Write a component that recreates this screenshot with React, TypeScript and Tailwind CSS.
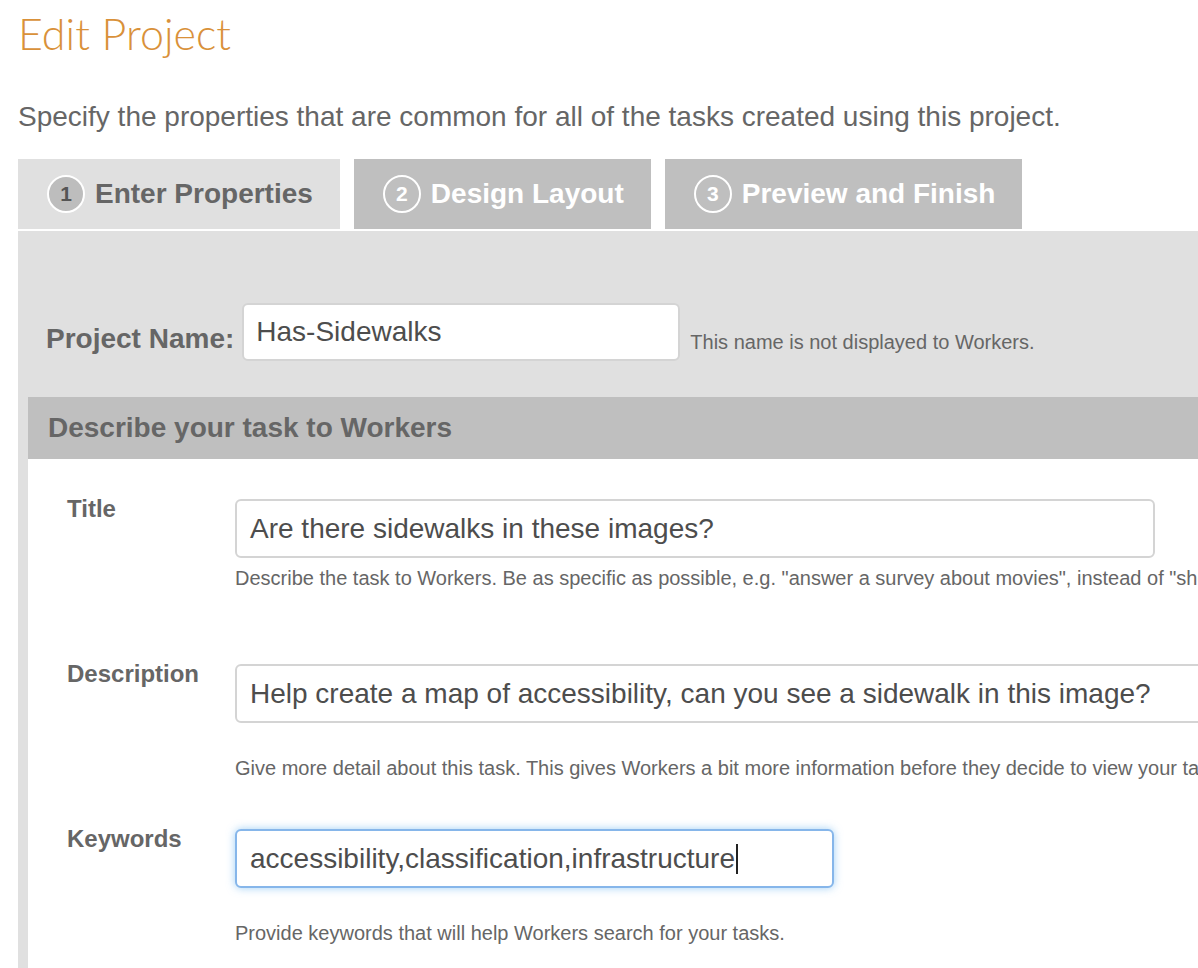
import React from 'react';

type Step = { n: number; label: string; active?: boolean };

const steps: Step[] = [
  { n: 1, label: 'Enter Properties', active: true },
  { n: 2, label: 'Design Layout' },
  { n: 3, label: 'Preview and Finish' },
];

// Pestaña del asistente
const StepTab: React.FC<{ step: Step }> = ({ step }) => (
  <div
    className={`h-[70px] flex items-center gap-[10px] pl-[29px] pr-[27px] ${
      step.active ? 'bg-[#e0e0e0] text-[#666]' : 'bg-[#bfbfbf] text-white'
    }`}
  >
    <span
      className={`w-[38px] h-[38px] rounded-full border-2 border-white flex items-center justify-center text-[21px] font-bold ${
        step.active ? 'bg-[#bdbdbd] text-[#555]' : 'text-white'
      }`}
    >
      {step.n}
    </span>
    <span className="text-[28px] font-bold leading-none">{step.label}</span>
  </div>
);

type Field = {
  label: string;
  value: string;
  help: string;
  width: string;
  helpGap: string;
  rowGap: string;
  focused?: boolean;
};

const fields: Field[] = [
  {
    label: 'Title',
    value: 'Are there sidewalks in these images?',
    help: 'Describe the task to Workers. Be as specific as possible, e.g. "answer a survey about movies", instead of "short survey", so Workers know what to expect.',
    width: 'w-[920px]',
    helpGap: 'mt-[9px]',
    rowGap: 'mb-[74px]',
  },
  {
    label: 'Description',
    value: 'Help create a map of accessibility, can you see a sidewalk in this image?',
    help: 'Give more detail about this task. This gives Workers a bit more information before they decide to view your task.',
    width: 'w-[1000px]',
    helpGap: 'mt-[34px]',
    rowGap: 'mb-[49px]',
  },
  {
    label: 'Keywords',
    value: 'accessibility,classification,infrastructure',
    help: 'Provide keywords that will help Workers search for your tasks.',
    width: 'w-[599px]',
    helpGap: 'mt-[34px]',
    rowGap: 'mb-[49px]',
    focused: true,
  },
];

const FieldRow: React.FC<{ field: Field }> = ({ field }) => (
  <div className={`flex pl-[39px] ${field.rowGap}`}>
    <div className="w-[168px] shrink-0 text-[24px] font-bold text-[#666] -mt-[8px]">{field.label}</div>
    <div className="flex flex-col">
      <div
        className={`${field.width} h-[59px] shrink-0 rounded-[6px] bg-white flex items-center pl-[13px] text-[28px] text-[#4d4d4d] whitespace-nowrap border-2 ${
          field.focused
            ? 'border-[#86b6ea] shadow-[0_0_8px_rgba(82,168,236,0.55)]'
            : 'border-[#d4d4d4]'
        }`}
      >
        {field.value}
        {field.focused && <span className="inline-block w-[2px] h-[30px] bg-[#222] ml-[1px]" />}
      </div>
      <p className={`${field.helpGap} text-[20px] leading-[23px] text-[#666] whitespace-nowrap`}>{field.help}</p>
    </div>
  </div>
);

export default function App() {
  return (
    <div className="w-[1198px] h-[968px] overflow-hidden bg-white font-['Liberation_Sans',Arial,sans-serif]">
      <div className="pl-[18px] pt-[12px] w-[1400px]">
        <h1 className="font-['Lato',sans-serif] font-light text-[43px] leading-none text-[#d9913a]">
          Edit Project
        </h1>
        <p className="mt-[46px] text-[28px] leading-[32px] text-[#666]">
          Specify the properties that are common for all of the tasks created using this project.
        </p>

        <div className="mt-[26px] flex gap-[14px]">
          {steps.map((s) => (
            <StepTab key={s.n} step={s} />
          ))}
        </div>

        <div className="mt-[2px] bg-[#e0e0e0] pl-[10px]">
          <div className="flex items-end pl-[18px] pt-[72px] pb-[36px]">
            <span className="text-[28px] font-bold text-[#666] mb-[1px] mr-[8px]">Project Name:</span>
            <div className="w-[438px] h-[58px] rounded-[6px] bg-white border-2 border-[#d4d4d4] flex items-center pl-[12px] text-[28px] text-[#4d4d4d]">
              Has-Sidewalks
            </div>
            <span className="ml-[10px] mb-[4px] text-[20px] text-[#666]">This name is not displayed to Workers.</span>
          </div>

          <div className="bg-white pb-[100px]">
            <div className="h-[62px] bg-[#bfbfbf] flex items-center pl-[20px] text-[28px] font-bold text-[#666]">
              Describe your task to Workers
            </div>
            <div className="pt-[40px]">
              {fields.map((f) => (
                <FieldRow key={f.label} field={f} />
              ))}
            </div>
          </div>
        </div>
      </div>
    </div>
  );
}
